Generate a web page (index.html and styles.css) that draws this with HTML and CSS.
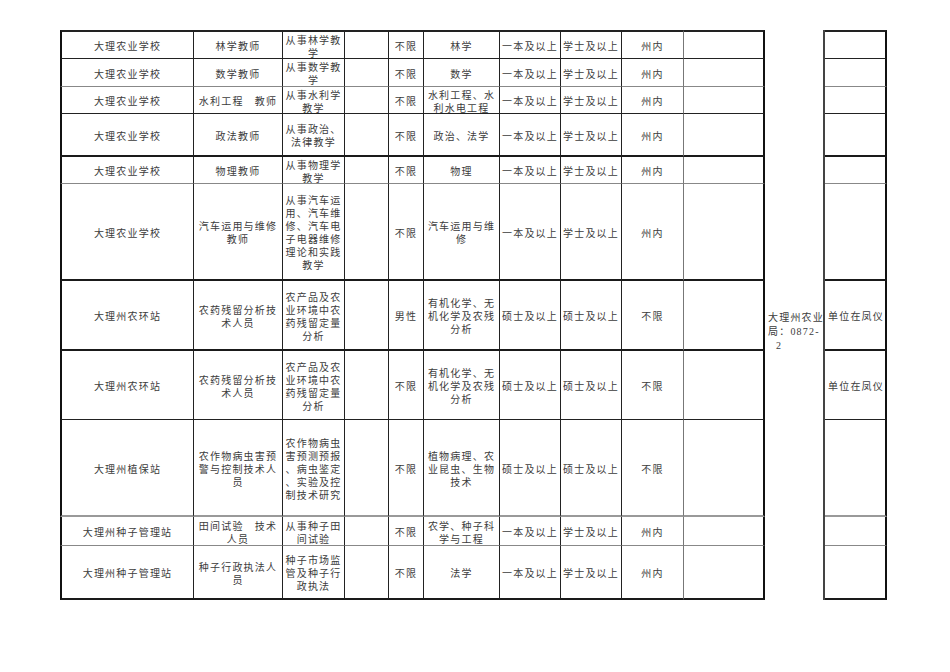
FILE: index.html
```html
<!DOCTYPE html>
<html lang="zh-CN">
<head>
<meta charset="utf-8">
<title>招聘岗位表</title>
<link rel="stylesheet" href="styles.css">
</head>
<body>
<div class="sheet">
  <div class="grid">
    <div class="row first ln-dark">
      <div class="c">大理农业学校</div>
      <div class="c">林学教师</div>
      <div class="c">从事林学教学</div>
      <div class="c"></div>
      <div class="c">不限</div>
      <div class="c">林学</div>
      <div class="c">一本及以上</div>
      <div class="c">学士及以上</div>
      <div class="c c-soft">州内</div>
      <div class="c c-heavy"></div>
      <div class="merged">大理州农业<br>局：0872-<br><span class="tail">2</span></div>
      <div class="c c-note"></div>
    </div>
    <div class="row ln-gray">
      <div class="c">大理农业学校</div>
      <div class="c">数学教师</div>
      <div class="c">从事数学教学</div>
      <div class="c"></div>
      <div class="c">不限</div>
      <div class="c">数学</div>
      <div class="c">一本及以上</div>
      <div class="c">学士及以上</div>
      <div class="c c-soft">州内</div>
      <div class="c c-heavy"></div>
      <div class="c c-note"></div>
    </div>
    <div class="row ln-dark">
      <div class="c">大理农业学校</div>
      <div class="c">水利工程　教师</div>
      <div class="c">从事水利学教学</div>
      <div class="c"></div>
      <div class="c">不限</div>
      <div class="c">水利工程、水利水电工程</div>
      <div class="c">一本及以上</div>
      <div class="c">学士及以上</div>
      <div class="c c-soft">州内</div>
      <div class="c c-heavy"></div>
      <div class="c c-note"></div>
    </div>
    <div class="row ln-bold">
      <div class="c">大理农业学校</div>
      <div class="c">政法教师</div>
      <div class="c">从事政治、法律教学</div>
      <div class="c"></div>
      <div class="c">不限</div>
      <div class="c">政治、法学</div>
      <div class="c">一本及以上</div>
      <div class="c">学士及以上</div>
      <div class="c c-soft">州内</div>
      <div class="c c-heavy"></div>
      <div class="c c-note"></div>
    </div>
    <div class="row ln-gray">
      <div class="c">大理农业学校</div>
      <div class="c">物理教师</div>
      <div class="c">从事物理学教学</div>
      <div class="c"></div>
      <div class="c">不限</div>
      <div class="c">物理</div>
      <div class="c">一本及以上</div>
      <div class="c">学士及以上</div>
      <div class="c c-soft">州内</div>
      <div class="c c-heavy"></div>
      <div class="c c-note"></div>
    </div>
    <div class="row ln-bold">
      <div class="c">大理农业学校</div>
      <div class="c">汽车运用与维修教师</div>
      <div class="c">从事汽车运用、汽车维修、汽车电子电器维修理论和实践教学</div>
      <div class="c"></div>
      <div class="c">不限</div>
      <div class="c">汽车运用与维修</div>
      <div class="c">一本及以上</div>
      <div class="c">学士及以上</div>
      <div class="c c-soft">州内</div>
      <div class="c c-heavy"></div>
      <div class="c c-note"></div>
    </div>
    <div class="row ln-bold">
      <div class="c">大理州农环站</div>
      <div class="c">农药残留分析技术人员</div>
      <div class="c">农产品及农业环境中农药残留定量分析</div>
      <div class="c"></div>
      <div class="c">男性</div>
      <div class="c">有机化学、无机化学及农残分析</div>
      <div class="c">硕士及以上</div>
      <div class="c">硕士及以上</div>
      <div class="c c-soft">不限</div>
      <div class="c c-heavy"></div>
      <div class="c c-note">单位在凤仪</div>
    </div>
    <div class="row ln-dark">
      <div class="c">大理州农环站</div>
      <div class="c">农药残留分析技术人员</div>
      <div class="c">农产品及农业环境中农药残留定量分析</div>
      <div class="c"></div>
      <div class="c">不限</div>
      <div class="c">有机化学、无机化学及农残分析</div>
      <div class="c">硕士及以上</div>
      <div class="c">硕士及以上</div>
      <div class="c c-soft">不限</div>
      <div class="c c-heavy"></div>
      <div class="c c-note">单位在凤仪</div>
    </div>
    <div class="row ln-grayb">
      <div class="c">大理州植保站</div>
      <div class="c">农作物病虫害预警与控制技术人员</div>
      <div class="c">农作物病虫害预测预报、病虫鉴定、实验及控制技术研究</div>
      <div class="c"></div>
      <div class="c">不限</div>
      <div class="c">植物病理、农业昆虫、生物技术</div>
      <div class="c">硕士及以上</div>
      <div class="c">硕士及以上</div>
      <div class="c c-soft">不限</div>
      <div class="c c-heavy"></div>
      <div class="c c-note"></div>
    </div>
    <div class="row ln-gray">
      <div class="c">大理州种子管理站</div>
      <div class="c">田间试验　技术人员</div>
      <div class="c">从事种子田间试验</div>
      <div class="c"></div>
      <div class="c">不限</div>
      <div class="c">农学、种子科学与工程</div>
      <div class="c">一本及以上</div>
      <div class="c">学士及以上</div>
      <div class="c c-soft">州内</div>
      <div class="c c-heavy"></div>
      <div class="c c-note"></div>
    </div>
    <div class="row ln-bold">
      <div class="c">大理州种子管理站</div>
      <div class="c">种子行政执法人员</div>
      <div class="c">种子市场监管及种子行政执法</div>
      <div class="c"></div>
      <div class="c">不限</div>
      <div class="c">法学</div>
      <div class="c">一本及以上</div>
      <div class="c">学士及以上</div>
      <div class="c c-soft">州内</div>
      <div class="c c-heavy"></div>
      <div class="c c-note"></div>
    </div>
  </div>
</div>
</body>
</html>
```

FILE: styles.css
```css
* {
  box-sizing: border-box;
  margin: 0;
  padding: 0;
}

html,
body {
  background: #ffffff;
}

body {
  font-family: "Liberation Serif", "Noto Sans CJK SC", sans-serif;
  font-size: 10px;
  color: #3c3c3c;
}

.sheet {
  padding: 30px 0 0 60px;
}

.grid {
  display: grid;
  grid-template-columns: 134px 89px 62px 44px 35px 76px 61px 61px 62px 81px 60px 62px;
  grid-template-rows: 29px 28px 27px 43px 27px 97px 70px 69px 97px 29px 54px;
  width: max-content;
}

.row {
  display: contents;
}

.c {
  display: flex;
  align-items: center;
  justify-content: center;
  text-align: center;
  padding: 3px 1px 0;
  border-right: 1px solid #222222;
  overflow: hidden;
  letter-spacing: 1.2px;
  line-height: 13px;
  line-break: anywhere;
}

.row > .c:first-child {
  border-left: 2px solid #111111;
}

.first > .c {
  border-top: 2px solid #222222;
}

.ln-dark > .c {
  border-bottom: 1px solid #222222;
}

.ln-gray > .c {
  border-bottom: 1px solid #888888;
}

.ln-bold > .c {
  border-bottom: 2px solid #1a1a1a;
}

.ln-grayb > .c {
  border-bottom: 2px solid #999999;
}

.c-soft {
  border-right-color: #777777;
}

.c-heavy {
  border-right: 2px solid #111111;
}

.c-note {
  border-right: 2px solid #111111;
  justify-content: flex-start;
  white-space: nowrap;
  padding-left: 3px;
}

.merged {
  grid-column: 11;
  grid-row: 1 / span 11;
  border-right: 2px solid #444444;
  padding: 281px 0 0 3px;
  line-height: 14px;
  letter-spacing: 1.2px;
  white-space: nowrap;
  overflow: hidden;
}

.tail {
  padding-left: 8px;
}
```
